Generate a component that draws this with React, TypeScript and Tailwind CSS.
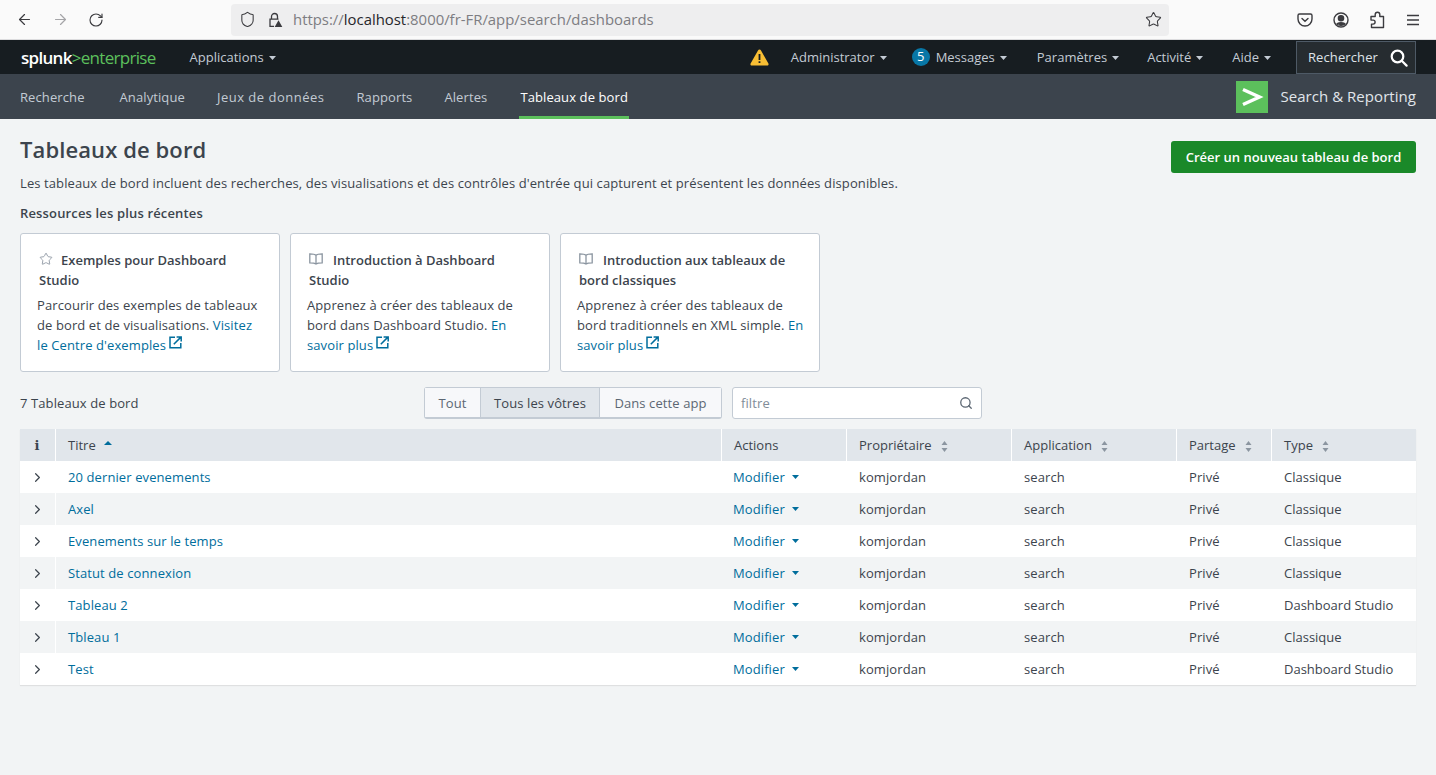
import { ArrowLeft, ArrowRight, ChevronRight, RotateCw, Search, Shield, Star } from "lucide-react";

const font = { fontFamily: "'Open Sans', 'Noto Sans', sans-serif" };

const dashboards = [
  { title: "20 dernier evenements", type: "Classique" },
  { title: "Axel", type: "Classique" },
  { title: "Evenements sur le temps", type: "Classique" },
  { title: "Statut de connexion", type: "Classique" },
  { title: "Tableau 2", type: "Dashboard Studio" },
  { title: "Tbleau 1", type: "Classique" },
  { title: "Test", type: "Dashboard Studio" },
];

const Caret = () => (
  <svg width="7" height="4" viewBox="0 0 7 4" className="ml-[5px] inline-block">
    <path d="M0 0h7L3.5 4z" fill="currentColor" />
  </svg>
);

const SortIcon = () => (
  <svg width="7" height="11" viewBox="0 0 7 11" className="ml-[9px] inline-block text-[#8b95a0]">
    <path d="M3.5 0l3 4h-6zM3.5 11l-3-4h6z" fill="currentColor" />
  </svg>
);

const ExternalIcon = () => (
  <svg width="13" height="13" viewBox="0 0 13 13" className="ml-[3px] inline-block align-[1px]" fill="none" stroke="currentColor" strokeWidth="1.5">
    <path d="M6 1.2H1v10.6h10.8V7" />
    <path d="M4.8 8.2L11.4 1.6M7.6 1h4.6v4.6" />
  </svg>
);

const BookIcon = () => (
  <svg width="14" height="12" viewBox="0 0 14 12" className="mr-[10px] inline-block align-[0px] text-[#8b95a0]" fill="none" stroke="currentColor" strokeWidth="1.3">
    <path d="M7 2.2C6 1.2 4.2.8.8.8v9c3.4 0 5.2.4 6.2 1.2 1-.8 2.8-1.2 6.2-1.2v-9C9.8.8 8 1.2 7 2.2zM7 2.2V11" />
  </svg>
);

const NavItem = ({ label }: { label: string }) => (
  <span className="flex items-center pt-[2px] text-[13px] tracking-normal text-[#c3cbd4]">
    {label}
    <Caret />
  </span>
);

const ResourceCard = ({
  icon,
  title,
  text,
  link,
}: {
  icon: React.ReactNode;
  title: string;
  text: string;
  link: string;
}) => (
  <div className="h-[139px] w-[260px] rounded-[3px] border border-[#c3cbd4] bg-white pl-4 pr-[15px] pt-4">
    <h3 className="pl-[2px] text-[13px] font-semibold leading-5 tracking-normal text-[#3c444d]">
      {icon}
      {title}
    </h3>
    <p className="mt-[5px] text-[13px] leading-5 text-[#3c444d]">
      {text} <a className="text-[#006d9c]">{link}<ExternalIcon /></a>
    </p>
  </div>
);

export default function App() {
  return (
    <div className="flex h-[775px] w-[1436px] flex-col overflow-hidden bg-[#f2f4f5] tracking-[0.1px]" style={font}>
      {/* Browser toolbar */}
      <div className="flex h-10 shrink-0 items-center border-b border-[#dcdcde] bg-[#fafafa] text-[#3b3b3f]">
        <div className="flex w-[231px] items-center pl-[16px]">
          <ArrowLeft size={17} strokeWidth={1.7} />
          <ArrowRight size={17} strokeWidth={1.7} className="ml-[19px] text-[#a5a5a8]" />
          <RotateCw size={16} strokeWidth={1.7} className="ml-[19px]" />
        </div>
        <div className="flex h-8 w-[938px] items-center rounded-[4px] bg-[#eeeeef] pl-[8px] pr-[7px]">
          <Shield size={17} strokeWidth={1.5} />
          <svg width="16" height="16" viewBox="0 0 16 16" className="ml-[11px]" fill="none" stroke="currentColor" strokeWidth="1.3">
            <path d="M4.5 7V4.5a3 3 0 016 0V7M7 14.4H3V7.2h8.5" />
            <path d="M11.5 8.2l3.8 6.8H7.7z" fill="currentColor" stroke="none" />
          </svg>
          <span className="ml-[10px] text-[14.9px] tracking-normal text-[#7d7d82]">
            https://<span className="text-[#26262b]">localhost</span>:8000/fr-FR/app/search/dashboards
          </span>
          <Star size={17} strokeWidth={1.5} className="ml-auto" />
        </div>
        <div className="ml-auto flex items-center gap-[20px] pr-[15px]">
          <svg width="16" height="16" viewBox="0 0 16 16" fill="none" stroke="currentColor" strokeWidth="1.4">
            <path d="M2.5 2h11A1.5 1.5 0 0115 3.5V7a7 7 0 01-14 0V3.5A1.5 1.5 0 012.5 2z" />
            <path d="M5 6.5l3 2.8 3-2.8" strokeLinecap="round" />
          </svg>
          <svg width="16" height="16" viewBox="0 0 16 16" fill="none" stroke="currentColor" strokeWidth="1.4">
            <circle cx="8" cy="8" r="7" />
            <circle cx="8" cy="6.2" r="2.6" fill="currentColor" />
            <path d="M3.8 12c1-1.6 7.4-1.6 8.4 0-1 1.6-7.4 1.6-8.4 0z" fill="currentColor" />
          </svg>
          <svg width="16" height="18" viewBox="0 0 16 18" fill="none" stroke="currentColor" strokeWidth="1.4" strokeLinejoin="round">
            <path d="M2 5.5h4.2V3.6a2.3 2.3 0 014.6 0v1.9H14.5v11H2.5v-3.4h1.6a2 2 0 000-4H2z" />
          </svg>
          <svg width="16" height="16" viewBox="0 0 16 16" stroke="currentColor" strokeWidth="1.3">
            <path d="M2 3.5h12M2 8h12M2 12.5h12" />
          </svg>
        </div>
      </div>

      {/* Splunk bar */}
      <div className="flex h-[34px] shrink-0 items-center bg-[#171d21] pl-[21px]">
        <span className="text-[17px] leading-none tracking-[-0.7px] text-white">
          <span className="font-semibold">splunk</span>
          <span className="font-normal text-[#5cc05c]">&gt;enterprise</span>
        </span>
        <span className="ml-[34px]">
          <NavItem label="Applications" />
        </span>
        <div className="ml-auto flex h-full items-center">
          <svg width="19" height="17" viewBox="0 0 19 17" className="mr-[22px]">
            <path d="M9.5 0.5c.7 0 1.2.4 1.5 1l7.4 13c.5 1-.1 2-1.2 2H1.8c-1.1 0-1.7-1-1.2-2l7.4-13c.3-.6.8-1 1.5-1z" fill="#f8be34" />
            <path d="M8.6 5h1.8v6H8.6zM8.6 12.2h1.8V14H8.6z" fill="#171d21" />
          </svg>
          <NavItem label="Administrator" />
          <span className="ml-[25px] flex items-center pt-[2px] text-[13px] tracking-normal text-[#c3cbd4]">
            <span className="-mt-[2px] mr-[6px] flex h-[18px] w-[18px] items-center justify-center rounded-full bg-[#0877a6] text-[13px] text-white">5</span>
            Messages
            <Caret />
          </span>
          <span className="ml-[30px]"><NavItem label="Paramètres" /></span>
          <span className="ml-[28px]"><NavItem label="Activité" /></span>
          <span className="ml-[29px]"><NavItem label="Aide" /></span>
          <div className="ml-[25px] mr-[20px] flex h-[33px] w-[120px] items-center justify-between self-end border border-[#4e5a66] bg-[#262c30] pl-[11px] pr-[7px] text-[13px] text-[#dfe3e8]">
            Rechercher
            <svg width="18" height="18" viewBox="0 0 18 18" fill="none" stroke="white" strokeWidth="2.2" strokeLinecap="round">
              <circle cx="7.5" cy="7.5" r="5.8" />
              <path d="M12 12l4.6 4.6" />
            </svg>
          </div>
        </div>
      </div>

      {/* App bar */}
      <div className="flex h-[45px] shrink-0 items-stretch bg-[#3c444d] pl-[19px] pr-[20px]">
        <span className="mr-[33px] flex items-center px-px pt-[3px] text-[13px] text-[#c3cbd4]">Recherche</span>
        <span className="mr-[30px] flex items-center px-px pt-[3px] text-[13px] text-[#c3cbd4]">Analytique</span>
        <span className="mr-[30px] flex items-center px-px pt-[3px] text-[13px] tracking-[0.5px] text-[#c3cbd4]">Jeux de données</span>
        <span className="mr-[30px] flex items-center px-px pt-[3px] text-[13px] text-[#c3cbd4]">Rapports</span>
        <span className="mr-[31px] flex items-center px-px pt-[3px] text-[13px] text-[#c3cbd4]">Alertes</span>
        <span className="flex items-center border-b-[3px] border-[#5cc05c] px-px pt-[6px] text-[13px] text-white">
          Tableaux de bord
        </span>
        <div className="ml-auto flex items-center pt-[1px]">
          <div className="flex h-8 w-8 items-center justify-center bg-[#5cc05c]">
            <svg width="32" height="32" viewBox="0 0 32 32" fill="none" stroke="white" strokeWidth="3.4">
              <path d="M7 8.5L23.5 16 7 23.5" />
            </svg>
          </div>
          <span className="ml-3 pb-[2px] text-[15px] tracking-[0.05px] text-[#e1e6eb]">Search &amp; Reporting</span>
        </div>
      </div>

      {/* Page */}
      <div className="flex flex-1 flex-col px-5">
        <div className="flex items-start justify-between pt-[22px]">
          <h1 className="-mt-[7px] text-[22px] font-semibold leading-[30px] text-[#3c444d]">Tableaux de bord</h1>
          <button className="h-8 w-[245px] rounded-[3px] bg-[#1a8929] pt-[2px] text-[13px] font-semibold tracking-normal text-white">
            Créer un nouveau tableau de bord
          </button>
        </div>
        <p className="text-[13px] leading-5 text-[#3c444d]">
          Les tableaux de bord incluent des recherches, des visualisations et des contrôles d'entrée qui capturent et présentent les données disponibles.
        </p>
        <h2 className="mt-[10px] text-[13px] font-semibold leading-5 tracking-[0.15px] text-[#3c444d]">Ressources les plus récentes</h2>

        <div className="mt-[10px] flex gap-[10px]">
          <ResourceCard
            icon={<Star size={14} strokeWidth={1.5} className="mr-[8px] inline-block align-[-1px] text-[#8b95a0]" />}
            title="Exemples pour Dashboard Studio"
            text="Parcourir des exemples de tableaux de bord et de visualisations."
            link="Visitez le Centre d'exemples"
          />
          <ResourceCard
            icon={<BookIcon />}
            title="Introduction à Dashboard Studio"
            text="Apprenez à créer des tableaux de bord dans Dashboard Studio."
            link="En savoir plus"
          />
          <ResourceCard
            icon={<BookIcon />}
            title="Introduction aux tableaux de bord classiques"
            text="Apprenez à créer des tableaux de bord traditionnels en XML simple."
            link="En savoir plus"
          />
        </div>

        {/* Filter row */}
        <div className="mt-[15px] flex h-8 items-center text-[13px] text-[#3c444d]">
          <span className="w-[404px] pt-[2px]">7 Tableaux de bord</span>
          <div className="flex h-8 rounded-[3px] border border-b-2 border-[#c3cbd4] text-[#5c6773]">
            <span className="flex w-[55px] items-center justify-center bg-[#f7f8fa] pt-[2px]">Tout</span>
            <span className="flex w-[120px] items-center justify-center border-x border-[#c3cbd4] bg-[#e1e6eb] pt-[2px] text-[#3c444d]">Tous les vôtres</span>
            <span className="flex w-[121px] items-center justify-center bg-[#f7f8fa] pt-[2px]">Dans cette app</span>
          </div>
          <div className="ml-[10px] flex h-8 w-[250px] items-center justify-between rounded-[3px] border border-[#c3cbd4] bg-white pl-2 pr-[8px] text-[#818d99]">
            <span className="pt-[2px]">filtre</span>
            <Search size={14} strokeWidth={2.2} className="text-[#5c6773]" />
          </div>
        </div>

        {/* Table */}
        <div className="mt-[10px] shadow-[0_1px_1px_rgba(0,0,0,0.08)]">
          <div className="grid h-8 grid-cols-[35px_666px_125px_165px_165px_95px_145px] items-stretch bg-[#e1e6eb] text-[13px] tracking-normal text-[#3c444d]">
            <span className="flex items-center justify-center pr-px pt-[2px] font-bold" style={{ fontFamily: "'DejaVu Serif', serif" }}>i</span>
            <span className="flex items-center border-l border-white pl-[12px] pt-[2px]">
              Titre
              <svg width="8" height="4" viewBox="0 0 8 4" className="mb-[7px] ml-[8px] text-[#006d9c]">
                <path d="M4 0l4 4H0z" fill="currentColor" />
              </svg>
            </span>
            <span className="flex items-center border-l border-white pl-[12px] pt-[2px]">Actions</span>
            <span className="flex items-center border-l border-white pl-[12px] pt-[2px]">Propriétaire<SortIcon /></span>
            <span className="flex items-center border-l border-white pl-[12px] pt-[2px]">Application<SortIcon /></span>
            <span className="flex items-center border-l border-white pl-[12px] pt-[2px]">Partage<SortIcon /></span>
            <span className="flex items-center border-l border-white pl-[12px] pt-[2px]">Type<SortIcon /></span>
          </div>
          {dashboards.map((d, i) => (
            <div
              key={d.title}
              className={`grid h-8 grid-cols-[35px_666px_125px_165px_165px_95px_145px] items-center text-[13px] text-[#3c444d] ${i % 2 === 0 ? "bg-white" : "bg-[#f2f4f5]"}`}
            >
              <span className="flex h-full items-center justify-center pr-px text-[#3c444d]">
                <ChevronRight size={15} strokeWidth={1.9} />
              </span>
              <span className={`flex h-full items-center border-l pl-[12px] pt-[2px] text-[#006d9c] ${i % 2 === 0 ? "border-transparent" : "border-white"}`}>{d.title}</span>
              <span className="flex items-center pl-[12px] text-[#006d9c]">
                <span className="pt-[2px]">Modifier</span>
                <svg width="7" height="4" viewBox="0 0 7 4" className="ml-[7px]">
                  <path d="M0 0h7L3.5 4z" fill="currentColor" />
                </svg>
              </span>
              <span className="pl-[13px] pt-[2px]">komjordan</span>
              <span className="pl-[13px] pt-[2px]">search</span>
              <span className="pl-[13px] pt-[2px]">Privé</span>
              <span className="pl-[13px] pt-[2px] tracking-normal">{d.type}</span>
            </div>
          ))}
        </div>
      </div>
    </div>
  );
}
